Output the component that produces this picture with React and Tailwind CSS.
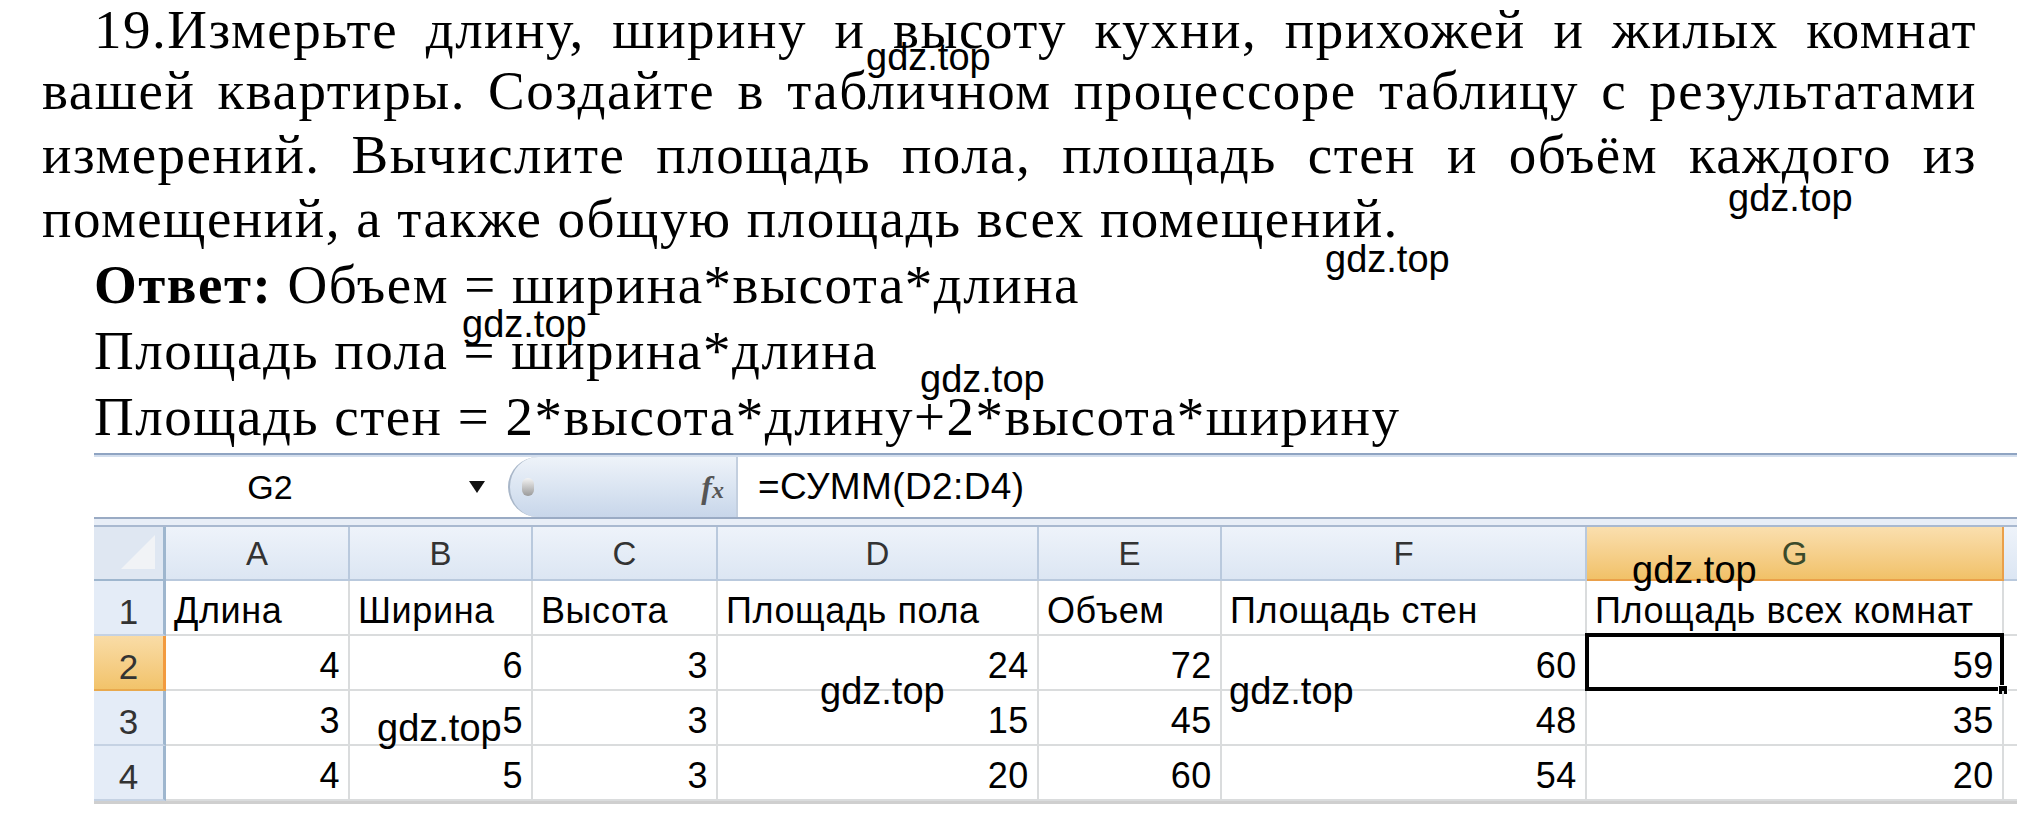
import React from 'react'

const serif = { fontFamily: '"Liberation Serif", "Times New Roman", serif' }
const sans = { fontFamily: '"Liberation Sans", Arial, sans-serif' }

const colsClass = 'grid grid-cols-[72px_184px_183px_185px_321px_183px_365px_417px_1fr]'

const letters = ['A', 'B', 'C', 'D', 'E', 'F', 'G']

const headerRow = ['Длина', 'Ширина', 'Высота', 'Площадь пола', 'Объем', 'Площадь стен', 'Площадь всех комнат']

const rows = [
    [4, 6, 3, 24, 72, 60, 59],
    [3, 5, 3, 15, 45, 48, 35],
    [4, 5, 3, 20, 60, 54, 20],
]

// task text, one entry per printed line
const taskLines = [
    'вашей квартиры. Создайте в табличном процессоре таблицу с результатами',
    'измерений. Вычислите площадь пола, площадь стен и объём каждого из',
]

// watermark spots: left, top
const marks = [
    'left-[866px] top-[38px]',
    'left-[1728px] top-[179px]',
    'left-[1325px] top-[240px]',
    'left-[462px] top-[305px]',
    'left-[920px] top-[360px]',
    'left-[1632px] top-[551px]',
    'left-[820px] top-[672px]',
    'left-[1229px] top-[672px]',
    'left-[377px] top-[709px]',
]

function Cell({ children, right, selected }) {
    return (
        <div
            className={
                'relative h-[55px] border-r-2 border-b-2 border-[#dadcdd] flex items-end pb-[5px] leading-none text-[36px] tracking-[0.6px] text-black ' +
                (right ? 'justify-end pr-[8px]' : 'pl-[8px]')
            }
        >
            <span className="whitespace-nowrap">{children}</span>
            {selected && (
                <>
                    <div className="absolute -left-[2px] -top-[3px] -right-[2px] -bottom-[2px] border-[4px] border-black" />
                    <div className="absolute -right-[6px] -bottom-[6px] w-[10px] h-[10px] bg-black border border-white" />
                </>
            )}
        </div>
    )
}

function RowHead({ n, active }) {
    return (
        <div
            className={
                'h-[55px] flex items-end justify-center pb-[5px] leading-none text-[35px] text-[#333] border-b-2 ' +
                (active
                    ? 'bg-gradient-to-b from-[#f9dca6] to-[#f2c36a] border-r-[3px] border-[#f29a3e] border-b-[#e8a94e]'
                    : 'bg-[#e4ecf7] border-r-[3px] border-[#9eb6ce] border-b-[#c5d2e3]')
            }
        >
            {n}
        </div>
    )
}

export default function App() {
    return (
        <div className="relative w-[2017px] h-[819px] bg-white overflow-hidden">
            {/* task text */}
            <div className="pl-[42px] w-[1977px] text-black text-[55px] tracking-[1.5px]" style={serif}>
                <div className="pl-[52px] leading-[60px] -mb-[1px] whitespace-nowrap text-justify [text-align-last:justify]">
                    19.Измерьте длину, ширину и высоту кухни, прихожей и жилых комнат
                </div>
                <div className="leading-[64px]">
                    {taskLines.map((t, i) => (
                        <div key={i} className="whitespace-nowrap text-justify [text-align-last:justify]">
                            {t}
                        </div>
                    ))}
                    <div className="whitespace-nowrap">помещений, а также общую площадь всех помещений.</div>
                </div>
                <div className="mt-[1px] pl-[52px] leading-[66px]">
                    <p>
                        <b>Ответ:</b> Объем = ширина*высота*длина
                    </p>
                    <p>Площадь пола = ширина*длина</p>
                    <p>Площадь стен = 2*высота*длину+2*высота*ширину</p>
                </div>
            </div>

            {/* excel screenshot */}
            <div className="ml-[94px] mt-[3px]" style={sans}>
                <div className="h-[4px] border-t-2 border-[#8fa4c2] bg-[#d3deed]" />

                {/* formula bar */}
                <div className="h-[60px] flex items-stretch bg-white">
                    <div className="w-[352px] flex items-center justify-center text-[34px] text-black">G2</div>
                    <div className="w-[62px] flex items-center justify-center">
                        <svg width="16" height="12" viewBox="0 0 16 12">
                            <path d="M0 0 H16 L8 12 Z" fill="#111" />
                        </svg>
                    </div>
                    <div className="w-[228px] rounded-l-[34px] border-l-2 border-[#a9b7c9] bg-gradient-to-b from-[#eef3f9] via-[#dbe5f2] to-[#c8d6ea] flex items-center justify-between pl-[12px] pr-[12px]">
                        <div className="w-[12px] h-[18px] rounded-full bg-gradient-to-b from-[#f4f4f4] to-[#9a9a9a]" />
                        <span className="italic font-bold text-[32px] text-[#555]" style={serif}>
                            f<span className="text-[24px]">x</span>
                        </span>
                    </div>
                    <div className="w-[2px] bg-[#c3cfdf]" />
                    <div className="flex-1 flex items-center pl-[20px] text-[37px] tracking-[0.4px] text-black">=СУММ(D2:D4)</div>
                </div>

                <div className="h-[10px] border-t-2 border-b-2 border-t-[#9aabc4] border-b-[#a9b9d0] bg-[#e8eef7]" />

                {/* column headers */}
                <div className={colsClass}>
                    <div className="relative h-[54px] bg-[#dfe7f2] border-r-[3px] border-b-2 border-[#9eb6ce]">
                        <svg className="absolute right-[8px] bottom-[10px]" width="34" height="34" viewBox="0 0 34 34">
                            <path d="M34 0 V34 H0 Z" fill="#f1f3f6" />
                        </svg>
                    </div>
                    {letters.map((l) => (
                        <div
                            key={l}
                            className={
                                'h-[54px] flex items-end justify-center pb-[9px] leading-none text-[33px] border-b-2 border-r-2 ' +
                                (l === 'G'
                                    ? 'bg-gradient-to-b from-[#fadfae] to-[#f1c168] border-[#eaa04a] text-[#3b4a2a]'
                                    : 'bg-gradient-to-b from-[#eef3fa] to-[#dce6f3] border-[#b9c9dd] text-[#333]')
                            }
                        >
                            {l}
                        </div>
                    ))}
                    <div className="h-[54px] bg-gradient-to-b from-[#eef3fa] to-[#dce6f3] border-b-2 border-[#b9c9dd]" />
                </div>

                {/* row 1 */}
                <div className={colsClass}>
                    <RowHead n={1} />
                    {headerRow.map((t, i) => (
                        <Cell key={i}>{t}</Cell>
                    ))}
                    <div className="h-[55px] border-b-2 border-[#dadcdd]" />
                </div>

                {rows.map((r, ri) => (
                    <div key={ri} className={colsClass}>
                        <RowHead n={ri + 2} active={ri === 0} />
                        {r.map((v, i) => (
                            <Cell key={i} right selected={ri === 0 && i === 6}>
                                {v}
                            </Cell>
                        ))}
                        <div className="h-[55px] border-b-2 border-[#dadcdd]" />
                    </div>
                ))}
                <div className="h-[3px] bg-[#cfcfcf]" />
            </div>

            {/* watermarks */}
            {marks.map((m, i) => (
                <span
                    key={i}
                    className={'absolute ' + m + ' text-[38px] leading-[38px] text-black whitespace-nowrap'}
                    style={sans}
                >
                    gdz.top
                </span>
            ))}
        </div>
    )
}
